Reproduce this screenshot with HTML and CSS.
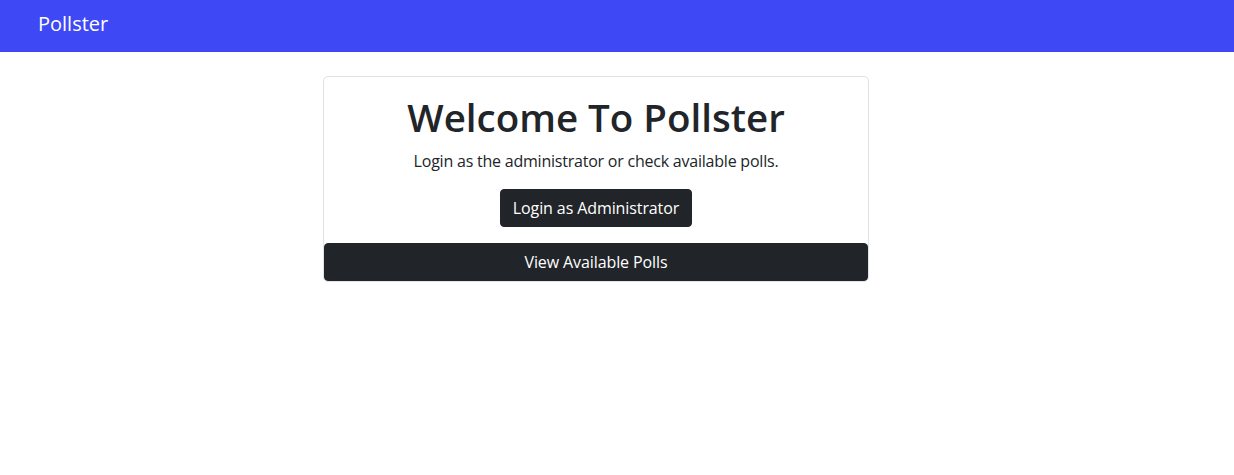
FILE: index.html
```html
<!DOCTYPE html>
<html lang="en">
<head>
<meta charset="utf-8">
<title>Pollster</title>
<link rel="stylesheet" href="styles.css">
</head>
<body>
<nav class="navbar">
  <a class="brand" href="#">Pollster</a>
</nav>
<main class="main">
  <div class="card">
    <div class="card-body">
      <h1 class="title">Welcome To Pollster</h1>
      <p class="lead">Login as the administrator or check available polls.</p>
      <a class="btn" href="#">Login as Administrator</a>
    </div>
    <a class="btn btn-block" href="#">View Available Polls</a>
  </div>
</main>
</body>
</html>
```
FILE: styles.css
```css
* { box-sizing: border-box; }
html, body { margin: 0; padding: 0; }
body {
  font-family: "Open Sans", "Noto Sans", sans-serif;
  font-size: 16px;
  line-height: 1.5;
  color: #212529;
  background: #fff;
}
.navbar {
  height: 52px;
  background: #3e49f5;
  display: flex;
  align-items: center;
  padding: 0 38px 5px;
}
.brand {
  color: #fff;
  text-decoration: none;
  font-size: 20px;
  line-height: 30px;
}
.main {
  padding-top: 24px;
  padding-left: 323px;
}
.card {
  width: 546px;
  border: 1px solid #dfe2e6;
  border-radius: 5px;
  display: flex;
  flex-direction: column;
}
.card-body {
  display: flex;
  flex-direction: column;
  align-items: center;
  padding: 16px 16px 16px;
}
.title {
  margin: 0 0 8px;
  font-size: 38.5px;
  font-weight: 600;
  line-height: 48px;
}
.lead {
  margin: 0 0 16px;
  letter-spacing: -0.22px;
}
.btn {
  display: inline-block;
  background: #212529;
  border: 1px solid #212529;
  color: #fff;
  text-decoration: none;
  padding: 6px 12px;
  line-height: 24px;
  border-radius: 4px;
  text-align: center;
  letter-spacing: -0.1px;
}
.btn-block {
  display: block;
  border-radius: 4px;
}
```
